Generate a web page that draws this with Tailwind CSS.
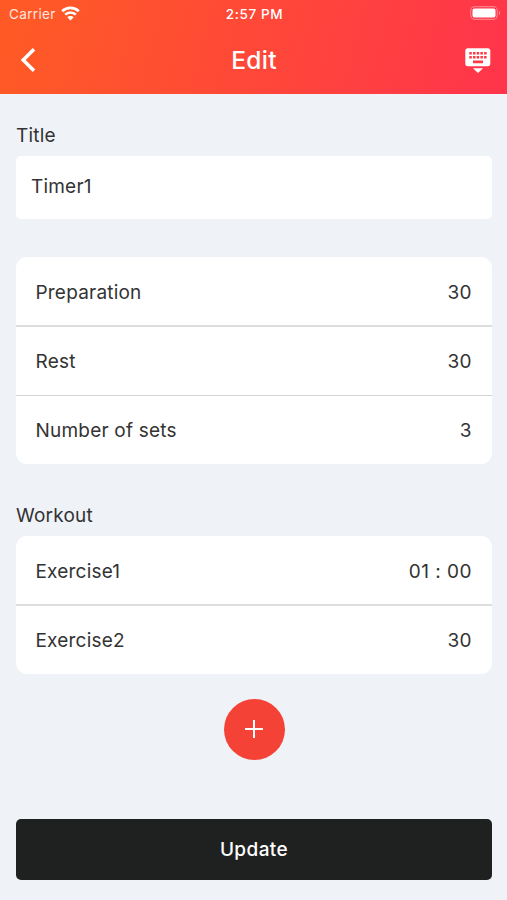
<!DOCTYPE html>
<html lang="en">
<head>
<meta charset="utf-8">
<title>Edit</title>
<script src="https://cdn.jsdelivr.net/npm/@tailwindcss/browser@4"></script>
</head>
<body class="w-[507px] h-[900px] overflow-hidden bg-[#eff3f8] font-['Inter','Liberation_Sans',sans-serif] text-[#333333] text-[19px] tracking-[0.2px] leading-6 flex flex-col">
  <header class="h-[94px] shrink-0 bg-[linear-gradient(105deg,#ff5a26_4%,#ff354b_98%)] text-white">
    <div class="h-7 grid grid-cols-3 items-center pl-[9px] pr-[6px]">
      <div class="flex items-center gap-[5px] text-white/85 text-[13.5px] leading-7 tracking-[0.35px]">Carrier
        <svg class="w-[19px] h-[15px] -mt-[2px]" viewBox="0 0 19 15" fill="none" stroke="#fff" stroke-width="2.6"><path d="M1.2 5.2a12 12 0 0 1 16.6 0M4.2 8.6a7.6 7.6 0 0 1 10.6 0"/><path d="M9.5 14.4 6.3 11.2a4.6 4.6 0 0 1 6.4 0z" fill="#fff" stroke="none"/></svg>
      </div>
      <div class="text-center text-[13.5px] leading-7 font-medium tracking-[0.6px] -ml-px">2:57 PM</div>
      <svg class="justify-self-end w-[31px] h-[14px] -mt-[2px]" viewBox="0 0 31 14"><rect x=".7" y=".7" width="26.6" height="12.6" rx="4" fill="none" stroke="#fff" stroke-opacity=".35" stroke-width="1.2"/><rect x="2.5" y="2.5" width="23" height="9" rx="2" fill="#fff"/><path d="M29 4.7q2 2.3 0 4.6z" fill="#fff" fill-opacity=".5"/></svg>
    </div>
    <div class="h-[64px] grid grid-cols-3 items-center pl-[20px] pr-[16px]">
      <svg class="w-4 h-6" viewBox="0 0 16 24" fill="none" stroke="#fff" stroke-width="3.5" stroke-linejoin="miter"><path d="M14 1.2 3.2 12 14 22.8"/></svg>
      <h1 class="text-center text-[24.5px] tracking-[0.3px] font-medium leading-8 -ml-[3px]">Edit</h1>
      <svg class="justify-self-end w-[26px] h-[26px]" viewBox="0 0 26 26" fill="#fff"><rect x=".3" y="1.2" width="25" height="18" rx="2.6"/><path d="M8 21.3h10l-5 4.7z"/><g fill="#fd3945"><path d="M4.3 5h2.5v2.6H4.3zM8 5h2.5v2.6H8zM11.7 5h2.5v2.6h-2.5zM15.4 5h2.5v2.6h-2.5zM19.1 5h2.5v2.6h-2.5zM4.3 9h2.5v2.6H4.3zM8 9h2.5v2.6H8zM11.7 9h2.5v2.6h-2.5zM15.4 9h2.5v2.6h-2.5zM19.1 9h2.5v2.6h-2.5zM8 13.6h10v2.6H8z"/></g></svg>
    </div>
  </header>
  <main class="px-4 pt-7 pr-[15px]">
    <label class="block h-[34px] leading-[27px]">Title</label>
    <div class="h-[63px] rounded-[5px] bg-white px-[15px] leading-[61px]">Timer1</div>
    <section class="mt-[38px] h-[207px] rounded-[11px] bg-white flex flex-col">
      <div class="h-[70px] border-b-2 border-[#dddddf] pl-[19.5px] pr-5 pt-[4px] flex items-center justify-between"><span>Preparation</span><span class="tracking-[0.4px]">30</span></div>
      <div class="h-[69px] border-b-[1px] border-[#d4d4d6] pl-[19.5px] pr-5 pt-[2px] flex items-center justify-between"><span>Rest</span><span class="tracking-[0.4px]">30</span></div>
      <div class="h-[68px] pl-[19.5px] pr-5 pt-px flex items-center justify-between"><span>Number of sets</span><span class="tracking-[0.4px]">3</span></div>
    </section>
    <h2 class="mt-[38px] h-[34px] leading-[27px]">Workout</h2>
    <section class="h-[138px] rounded-[11px] bg-white flex flex-col">
      <div class="h-[70px] border-b-2 border-[#dddddf] pl-[19.5px] pr-5 pt-[4px] flex items-center justify-between"><span>Exercise1</span><span class="tracking-[0.5px]">01 : 00</span></div>
      <div class="h-[68px] pl-[19.5px] pr-5 pt-[2px] flex items-center justify-between"><span>Exercise2</span><span class="tracking-[0.4px]">30</span></div>
    </section>
    <button class="mt-[24.5px] mx-auto size-[61px] rounded-full bg-[#f44336] flex items-center justify-center" aria-label="Add">
      <svg class="w-[18px] h-[18px]" viewBox="0 0 18 18" stroke="#fff" stroke-width="2"><path d="M9 0v18M0 9h18"/></svg>
    </button>
    <button class="mt-[59px] block w-full h-[61px] pt-[2px] rounded-[5px] bg-[#1f2121] text-white font-medium tracking-[0.4px]">Update</button>
  </main>
</body>
</html>
